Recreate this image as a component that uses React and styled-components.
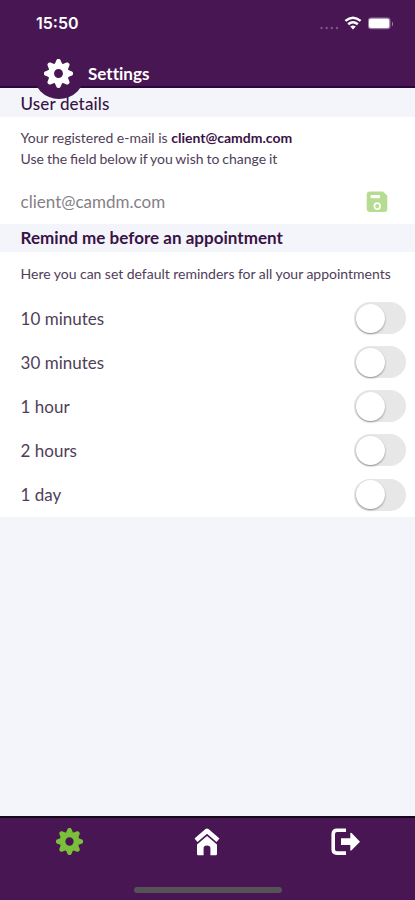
import styled, { createGlobalStyle } from "styled-components";
import { useState } from "react";


const REMINDERS = ['10 minutes', '30 minutes', '1 hour', '2 hours', '1 day'];
const TEETH = [0, 45, 90, 135, 180, 225, 270, 315];

function GearIcon({size, color}) {
    return (
        <Icon width={size} height={size} viewBox="-14 -14 28 28">
            <circle r="7.2" fill="none" stroke={color} strokeWidth="5.8" />
            {TEETH.map(angle => (
                <path
                    key={angle}
                    d="M-3.7 -9 L-2 -12.9 Q-1.5 -14 -0.7 -14 H0.7 Q1.5 -14 2 -12.9 L3.7 -9 Z"
                    fill={color}
                    transform={`rotate(${angle})`}
                />
            ))}
        </Icon>
    );
}

function HomeIcon() {
    return (
        <Icon width="26" height="28" viewBox="0 0 26 28">
            <path d="M2 12.2 L13 2.8 L24 12.2" fill="none" stroke="#fff" strokeWidth="4.6" strokeLinejoin="round" />
            <path d="M3 16.6 L13 8 L23 16.6 V26 Q23 27.2 21.8 27.2 H16.4 V20 Q16.4 17.4 13 17.4 Q9.6 17.4 9.6 20 V27.2 H4.2 Q3 27.2 3 26 Z" fill="#fff" />
        </Icon>
    );
}

function LogoutIcon() {
    return (
        <Icon width="29" height="28" viewBox="0 0 29 28">
            <path d="M15 2.3 H6 Q2.2 2.3 2.2 6.1 V21.3 Q2.2 25.1 6 25.1 H15" fill="none" stroke="#fff" strokeWidth="3.6" />
            <path d="M10 10.3 H19.3 V5.6 Q19.3 4 20.6 5.1 L29 13.7 L20.6 22.3 Q19.3 23.4 19.3 21.8 V17.1 H10 Z" fill="#fff" />
        </Icon>
    );
}

function SaveIcon() {
    return (
        <Icon width="22" height="22" viewBox="0 0 22 22">
            <path d="M4 .5 H17 L21.3 4.8 V17.8 Q21.3 21.1 18 21.1 H4 Q.7 21.1 .7 17.8 V3.8 Q.7 .5 4 .5 Z" fill="#b5dc91" />
            <rect x="4.5" y="4" width="9.5" height="3.2" rx="1" fill="#fff" />
            <ellipse cx="11.2" cy="15.2" rx="2.8" ry="3" fill="none" stroke="#fff" strokeWidth="1.7" />
        </Icon>
    );
}

function StatusIcons() {
    return (
        <Icon width="76" height="16" viewBox="0 0 76 16">
            <g fill="#7d5588">
                <circle cx="6.5" cy="12" r="1.2" />
                <circle cx="11.7" cy="12" r="1.2" />
                <circle cx="16.8" cy="12" r="1.2" />
                <circle cx="22" cy="12" r="1.2" />
            </g>
            <g fill="none" stroke="#fff" strokeWidth="2.5">
                <path d="M30.4 4.9 Q38 -1.5 45.6 4.9" />
                <path d="M33.2 8.2 Q38 4.2 42.8 8.2" />
            </g>
            <path d="M35.2 10.5 Q38 8.3 40.8 10.5 L38 13.5 Z" fill="#fff" />
            <rect x="53" y="1.6" width="22.5" height="11.6" rx="3.2" fill="#9a7aa2" />
            <rect x="54" y="2.7" width="20.2" height="9.4" rx="2" fill="#fff" />
        </Icon>
    );
}

function Reminder({label}) {
    const [on, setOn] = useState(false);

    return (
        <Row>
            <RowLabel>{label}</RowLabel>
            <Switch $on={on} role="switch" aria-checked={on} aria-label={label} onClick={() => setOn(!on)}>
                <Knob />
            </Switch>
        </Row>
    );
}

export default function App() {
    return (
        <Screen>
            <GlobalStyle />
            <Header>
                <StatusBar>
                    <Clock>15:50</Clock>
                    <StatusIcons />
                    <BatteryTip />
                </StatusBar>
                <TitleBar>
                    <Badge><GearIcon size={29} color="#fff" /></Badge>
                    <Title>Settings</Title>
                </TitleBar>
            </Header>
            <Panel>
                <SectionTitle $height="29px" $line="31px" $spacing="0.12px" $weight="500">User details</SectionTitle>
                <Details>
                    <p>Your registered e-mail is <strong>client@camdm.com</strong></p>
                    <Tight>Use the field below if you wish to change it</Tight>
                </Details>
                <Field>
                    <Email>client@camdm.com</Email>
                    <SaveIcon />
                </Field>
                <SectionTitle $height="28px" $line="28px" $spacing="0.02px" $weight="700">Remind me before an appointment</SectionTitle>
                <Hint>Here you can set default reminders for all your appointments</Hint>
                {REMINDERS.map(label => <Reminder key={label} label={label} />)}
            </Panel>
            <Footer>
                <Tab><GearIcon size={27} color="#7bbf3a" /></Tab>
                <Tab><HomeIcon /></Tab>
                <Tab><LogoutIcon /></Tab>
                <HomeIndicator />
            </Footer>
        </Screen>
    );
}


const GlobalStyle = createGlobalStyle`
    * {
        box-sizing: border-box;
    }
    body, p, h1, h2 {
        margin: 0;
    }
    body {
        font-family: Lato, sans-serif;
        color: #503e59;
    }
`
const Screen = styled.div`
    display: flex;
    flex-direction: column;
    width: 415px;
    height: 900px;
    overflow: hidden;
    background: #f3f5fa;
`
const Icon = styled.svg`
    display: block;
    flex: none;
`
const Header = styled.header`
    position: relative;
    z-index: 1;
    height: 88px;
    background: #481653;
    border-bottom: 2px solid #2d0639;
`
const StatusBar = styled.div`
    display: flex;
    align-items: center;
    height: 47px;
    padding: 0 22px 0 36px;
`
const Clock = styled.span`
    flex: 1;
    font-family: Inter, sans-serif;
    font-size: 16px;
    font-weight: 600;
    line-height: 18px;
    padding-bottom: 1px;
    color: #fff;
`
const BatteryTip = styled.span`
    width: 1.5px;
    height: 4px;
    margin-left: 0.5px;
    border-radius: 0 2px 2px 0;
    background: #9a7aa2;
`
const TitleBar = styled.div`
    display: flex;
    align-items: center;
    height: 52px;
    padding-left: 32.5px;
`
const Badge = styled.div`
    display: flex;
    align-items: center;
    justify-content: center;
    width: 52px;
    height: 52px;
    border-radius: 50%;
    background: #481653;
`
const Title = styled.h1`
    margin: 1px 0 0 3.5px;
    font-size: 17px;
    line-height: 20px;
    font-weight: 700;
    letter-spacing: 0.02px;
    color: #fff;
`
const Panel = styled.main`
    height: 429px;
    background: #fff;
`
const SectionTitle = styled.h2`
    height: ${props => props.$height};
    padding-left: 20.6px;
    background: #f3f5fa;
    font-size: 17px;
    line-height: ${props => props.$line};
    font-weight: ${props => props.$weight};
    letter-spacing: ${props => props.$spacing};
    color: #391346;
`
const Details = styled.div`
    height: 63px;
    padding: 10px 20.6px 0;
    font-size: 14px;
    line-height: 21px;

    strong {
        font-weight: 700;
        color: #391346;
    }
`
const Tight = styled.p`
    word-spacing: -0.7px;
`
const Field = styled.div`
    display: flex;
    align-items: center;
    justify-content: space-between;
    height: 44px;
    padding: 0 27px 1px 20.6px;
`
const Email = styled.span`
    font-size: 17px;
    color: #858087;
`
const Hint = styled.p`
    height: 44px;
    padding-left: 20.6px;
    font-size: 14px;
    line-height: 44px;
    word-spacing: -0.15px;
    white-space: nowrap;
`
const Row = styled.div`
    display: flex;
    align-items: center;
    justify-content: space-between;
    height: 44.15px;
    padding: 0 9px 0 20.6px;
`
const RowLabel = styled.span`
    font-size: 17px;
`
const Switch = styled.button`
    display: flex;
    align-items: center;
    justify-content: ${props => props.$on ? 'flex-end' : 'flex-start'};
    width: 52px;
    height: 32px;
    padding: 1px;
    border: 0;
    border-radius: 16px;
    background: ${props => props.$on ? '#7bbf3a' : '#e7e7e8'};
`
const Knob = styled.span`
    width: 29px;
    height: 29px;
    margin: 0 0.5px;
    border-radius: 50%;
    background: #fff;
    box-shadow: 0 1px 2px #8c8c8c;
`
const Footer = styled.footer`
    position: relative;
    display: flex;
    height: 84px;
    margin-top: auto;
    background: #481653;
    border-top: 2px solid #17091c;
`
const Tab = styled.div`
    display: flex;
    flex: 1;
    justify-content: center;
    padding-top: 10px;
`
const HomeIndicator = styled.div`
    position: absolute;
    left: 134px;
    bottom: 7px;
    width: 148px;
    height: 6px;
    border-radius: 3px;
    background: #555356;
`
